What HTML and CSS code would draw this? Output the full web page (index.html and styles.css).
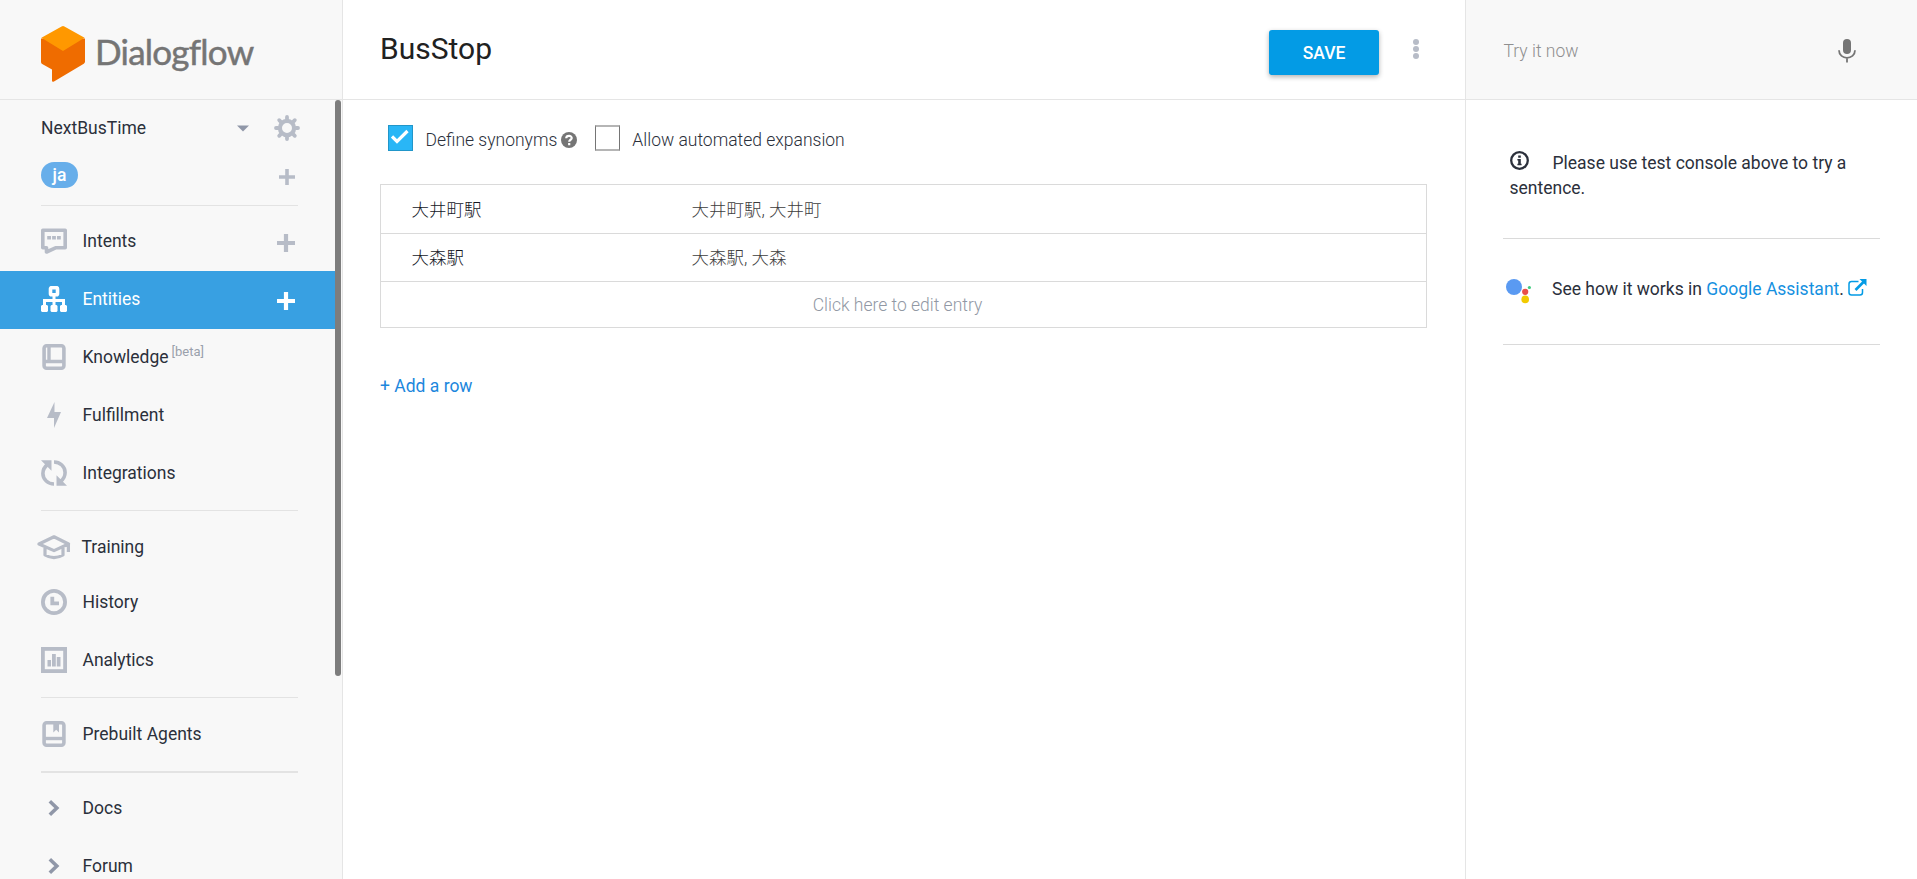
FILE: index.html
```
<!DOCTYPE html>
<html lang="en">

<head>
	<title>Dialogflow</title>
	<meta charset="UTF-8">
	<link rel="stylesheet" href="styles.css">
	<meta name="viewport" content="width=device-width, initial-scale=1">
</head>

<body>
	<nav class="sidebar">
		<div class="logo">
			<svg class="logo-mark" width="46" height="58" viewBox="0 0 46 58">
				<path fill="#ef6c00" d="M1 13.5 L45 13.5 V36.5 Q45 38 43.8 38.7 L14 56.5 Q12 57.5 12 55.5 V44.5 L2.2 39 Q1 38.3 1 37Z" />
				<path fill="#ff9800" d="M1.4 12.8 L21.6 1.4 Q23 .6 24.4 1.4 L44.6 12.8 L23 26Z" />
			</svg>
			<span class="logo-text">Dialogflow</span>
		</div>
		<div class="menu">
			<div class="agent">
				<span class="agent-name">NextBusTime</span>
				<svg class="caret" width="12" height="7" viewBox="0 0 12 7"><path d="M0 0.5H12L6 6.5Z" /></svg>
				<svg class="icon" width="26" height="26" viewBox="0 0 26 26">
					<circle cx="13" cy="13" r="7.1" fill="none" stroke="currentColor" stroke-width="4.2" />
					<path stroke="currentColor" stroke-width="3.8" stroke-linecap="round" d="M13 4V2M13 22V24M4 13H2M22 13H24M6.6 6.6L5.2 5.2M19.4 6.6L20.8 5.2M6.6 19.4L5.2 20.8M19.4 19.4L20.8 20.8" />
				</svg>
			</div>
			<div class="lang">
				<span class="lang-badge">ja</span>
				<svg class="icon plus-small" width="16" height="16" viewBox="0 0 16 16"><path d="M8 0V16M0 8H16" stroke="currentColor" stroke-width="3.6" /></svg>
			</div>
			<hr>
			<a class="item">
				<svg class="icon" width="26" height="26" viewBox="0 0 26 26">
					<path fill="none" stroke="currentColor" stroke-width="3.6" stroke-linejoin="round" d="M1.8 2.2H24.2V19.8H14.5L5.5 24V19.8H1.8Z" />
					<path fill="currentColor" d="M6.2 8H10V11.6H6.2ZM11.1 8H14.9V11.6H11.1ZM16 8H19.8V11.6H16Z" />
				</svg>
				<span>Intents</span>
				<svg class="plus" width="18" height="18" viewBox="0 0 18 18"><path d="M9 0V18M0 9H18" stroke="currentColor" stroke-width="4.2" /></svg>
			</a>
			<a class="item active">
				<svg class="icon" width="26" height="26" viewBox="0 0 26 26">
					<path fill="none" stroke="currentColor" stroke-width="3" d="M13 9V20M3.5 20V14.5H22.5V20" />
					<rect x="9.5" y="1.7" width="7" height="7" rx="1" fill="none" stroke="currentColor" stroke-width="3.6" />
					<path fill="currentColor" d="M1 19H6L7 20V25L6 26H1L0 25V20ZM10.5 19H15.5L16.5 20V25L15.5 26H10.5L9.5 25V20ZM20 19H25L26 20V25L25 26H20L19 25V20Z" />
				</svg>
				<span>Entities</span>
				<svg class="plus" width="18" height="18" viewBox="0 0 18 18"><path d="M9 0V18M0 9H18" stroke="currentColor" stroke-width="4.2" /></svg>
			</a>
			<a class="item">
				<svg class="icon" width="26" height="26" viewBox="0 0 26 26">
					<rect x="3.1" y="1.8" width="19.8" height="22.4" rx="2.5" fill="none" stroke="currentColor" stroke-width="3.6" />
					<path stroke="currentColor" stroke-width="3.4" d="M8 2V17M3 17.5H23" />
				</svg>
				<span>Knowledge<sup>[beta]</sup></span>
			</a>
			<a class="item">
				<svg class="icon" width="26" height="26" viewBox="0 0 26 26"><path fill="currentColor" d="M13.5 0V10H20L13 26V16H6Z" /></svg>
				<span>Fulfillment</span>
			</a>
			<a class="item">
				<svg class="icon" width="26" height="26" viewBox="0 0 26 26">
					<path fill="none" stroke="currentColor" stroke-width="3.6" d="M13 24C7 24 1.9 19.5 1.9 13.5C1.9 9 4 6.5 6.5 4.5M13 2C19 2 24.1 6.5 24.1 12.5C24.1 17 22 19.5 19.5 21.5" />
					<path fill="currentColor" d="M0 .2H10.5V10.7ZM26 25.8H15.5V15.3Z" />
				</svg>
				<span>Integrations</span>
			</a>
			<hr>
			<a class="item training">
				<svg class="icon wide" width="34" height="26" viewBox="0 0 34 26">
					<path fill="none" stroke="currentColor" stroke-width="3.2" stroke-linejoin="round" d="M2 10L17 2.8L31.5 10L17 16.6ZM8 13V21Q17 26.4 26 21V13M31.4 10V18" />
				</svg>
				<span>Training</span>
			</a>
			<a class="item">
				<svg class="icon" width="26" height="26" viewBox="0 0 26 26">
					<circle cx="13" cy="13" r="11.1" fill="none" stroke="currentColor" stroke-width="3.8" />
					<path fill="none" stroke="currentColor" stroke-width="3.8" d="M11.3 7.8V14.4H18" />
				</svg>
				<span>History</span>
			</a>
			<a class="item">
				<svg class="icon" width="26" height="26" viewBox="0 0 26 26">
					<rect x="1.9" y="1.9" width="22.2" height="22.2" fill="none" stroke="currentColor" stroke-width="3.8" />
					<path fill="currentColor" d="M6.5 13H10V19.5H6.5ZM11 7H14.8V19.5H11ZM15.8 10H19.5V19.5H15.8Z" />
				</svg>
				<span>Analytics</span>
			</a>
			<hr class="tall">
			<a class="item">
				<svg class="icon" width="26" height="26" viewBox="0 0 26 26">
					<rect x="3.1" y="1.8" width="19.8" height="22.4" rx="2.5" fill="none" stroke="currentColor" stroke-width="3.6" />
					<path stroke="currentColor" stroke-width="3.4" d="M3 17.5H23" />
					<path fill="currentColor" d="M12.3 2H18V11.5L15.2 8.8L12.3 11.5Z" />
				</svg>
				<span>Prebuilt Agents</span>
			</a>
			<hr class="thick">
			<a class="item">
				<svg class="icon chevron" width="26" height="26" viewBox="0 0 26 26"><path fill="none" stroke="currentColor" stroke-width="3.6" d="M8.8 6.3L15.8 13L8.8 19.7" /></svg>
				<span>Docs</span>
			</a>
			<a class="item">
				<svg class="icon chevron" width="26" height="26" viewBox="0 0 26 26"><path fill="none" stroke="currentColor" stroke-width="3.6" d="M8.8 6.3L15.8 13L8.8 19.7" /></svg>
				<span>Forum</span>
			</a>
		</div>
		<div class="scroll-thumb"></div>
	</nav>

	<main class="main">
		<header class="main-header">
			<h1>BusStop</h1>
			<button class="save">SAVE</button>
			<svg class="more" width="6" height="20" viewBox="0 0 6 20">
				<circle cx="3" cy="3" r="3" /><circle cx="3" cy="10" r="3" /><circle cx="3" cy="17" r="3" />
			</svg>
		</header>
		<div class="options">
			<span class="checkbox checked">
				<svg width="19" height="16" viewBox="0 0 19 16"><path fill="none" stroke="#fff" stroke-width="3.2" d="M1 7.5L6 12.5L16.5 2" /></svg>
			</span>
			<label>Define synonyms</label>
			<svg class="help" width="16" height="16" viewBox="0 0 16 16">
				<circle cx="8" cy="8" r="8" fill="#757575" />
				<path fill="none" stroke="#fff" stroke-width="2.2" d="M5.2 6.2C5.4 3 11 3.2 10.7 6.2C10.5 7.8 8.2 7.8 8.2 9.8M8.2 11V13.2" />
			</svg>
			<span class="checkbox"></span>
			<label>Allow automated expansion</label>
		</div>
		<div class="entries">
			<div class="entry"><span class="value">大井町駅</span><span class="synonyms">大井町駅, 大井町</span></div>
			<div class="entry second"><span class="value">大森駅</span><span class="synonyms">大森駅, 大森</span></div>
			<div class="entry empty">Click here to edit entry</div>
		</div>
		<a class="add-row">+ Add a row</a>
	</main>

	<aside class="console">
		<header class="console-header">
			<span>Try it now</span>
			<svg width="18" height="24" viewBox="0 0 18 24">
				<rect x="5" y="0" width="8" height="15" rx="4" fill="#757575" />
				<path fill="none" stroke="#757575" stroke-width="1.8" d="M1 11.3C1 21.3 17 21.3 17 11.3M9 19V23.5" />
			</svg>
		</header>
		<div class="console-body">
			<p class="hint">
				<svg class="info" width="19" height="19" viewBox="0 0 19 19">
					<circle cx="9.5" cy="9.5" r="8.3" fill="none" stroke="currentColor" stroke-width="2.3" />
					<path fill="currentColor" d="M8.2 4.5H10.8V6.7H8.2ZM7.4 8H10.8V12.8H11.6V14.2H7.4V12.8H8.2V9.4H7.4Z" />
				</svg>Please use test console above to try a sentence.
			</p>
			<div class="assistant">
				<svg class="assistant-logo" width="26" height="25" viewBox="0 0 26 25">
					<circle cx="8" cy="8" r="8" fill="#5a9af2" />
					<circle cx="19.2" cy="12.8" r="3.1" fill="#e94f48" />
					<circle cx="19.2" cy="20.4" r="3.8" fill="#f2ca00" />
					<circle cx="23.4" cy="8.5" r="1.6" fill="#3fcb7e" />
				</svg>
				<span>See how it works in <a>Google Assistant</a>.</span>
				<svg class="external" width="19" height="17" viewBox="0 0 19 17">
					<path fill="none" stroke="currentColor" stroke-width="1.5" d="M10.5 2.5H3.5Q1 2.5 1 5V13.5Q1 16 3.5 16H12Q14.5 16 14.5 13.5V10" />
					<path fill="none" stroke="currentColor" stroke-width="2.6" d="M7.5 11L15.5 3" />
					<path fill="currentColor" d="M11.5 0H18.5V7Z" />
				</svg>
			</div>
		</div>
	</aside>
</body>

</html>
```
FILE: styles.css
```
* {
	box-sizing: border-box;
}

body {
	display: flex;
	height: 100vh;
	margin: 0;
	overflow: hidden;
	color: #2b303b;
	background: #fff;
	font-family: Roboto, "Noto Sans CJK JP", sans-serif;
	font-size: 17.5px;
}

svg {
	display: block;
	flex: none;
}

/* sidebar */
.sidebar {
	position: relative;
	flex: none;
	width: 343px;
	background: #f8f8f8;
	border-right: 1px solid #e5e5e5;
}

.logo {
	display: flex;
	height: 100px;
	padding: 25px 0 0 40px;
	border-bottom: 1px solid #e5e5e5;
}

.logo-text {
	margin-left: 9px;
	color: #757575;
	font-family: Lato, sans-serif;
	font-size: 35px;
	letter-spacing: -0.75px;
	line-height: 52px;
	-webkit-text-stroke: 0.5px #757575;
}

.menu {
	width: 335px;
}

.agent {
	display: flex;
	align-items: center;
	height: 56px;
	padding: 0 35px 0 41px;
}

.agent-name {
	flex: 1;
}

.caret {
	margin-right: 25px;
	fill: #9097a8;
}

.lang {
	display: flex;
	align-items: center;
	justify-content: space-between;
	height: 49px;
	padding: 0 40px 11px 41px;
}

.lang-badge {
	width: 37px;
	height: 26px;
	color: #fff;
	background: #67aeea;
	border-radius: 13px;
	font-weight: 500;
	line-height: 26px;
	text-align: center;
}

.plus-small {
	margin-top: 3px;
}

hr {
	width: 257px;
	height: 1px;
	margin: 0 0 7px 41px;
	background: #e3e3e3;
	border: 0;
}

.item + hr {
	margin-top: 7px;
}

hr.tall {
	margin-bottom: 8px;
}

hr.thick {
	height: 2px;
}

.item {
	display: flex;
	align-items: center;
	height: 58px;
	padding: 0 40px 2px 41px;
}

.item span {
	flex: 1;
	margin-left: 15.5px;
	line-height: 22px;
}

.item sup {
	margin-left: 3px;
	color: #9aa1ac;
	font-size: 13px;
	line-height: 0;
	vertical-align: 7px;
}

.icon,
.plus {
	color: #b7bcc7;
}

.plus {
	margin-top: 3px;
}

.active {
	color: #fff;
	background: #38a0e2;
}

.active .icon,
.active .plus {
	color: #fff;
}

.training {
	height: 56px;
	padding: 1px 40px 0 41px;
}

.wide {
	margin: 0 -5px 0 -4px;
}

.chevron {
	color: #9097a8;
}

.scroll-thumb {
	position: absolute;
	top: 100px;
	left: 335px;
	width: 6px;
	height: 576px;
	background: #7d7d7d;
	border-radius: 3px;
}

/* entity editor */
.main {
	flex: 1;
}

.main-header {
	display: flex;
	height: 100px;
	padding: 30px 46px 0 37px;
	border-bottom: 1px solid #e5e5e5;
}

h1 {
	flex: 1;
	margin: 0;
	color: #212121;
	font-size: 30px;
	font-weight: 400;
	line-height: 37px;
}

.save {
	width: 110px;
	height: 45px;
	color: #fff;
	background: #039be5;
	border: 0;
	border-radius: 3px;
	box-shadow: 0 2px 5px rgba(0, 0, 0, 0.3);
	font: 500 17.5px Roboto, sans-serif;
}

.more {
	margin: 9px 0 0 34px;
	fill: #b7bcc7;
}

.options {
	display: flex;
	height: 84px;
	padding: 25px 0 0 45px;
	font-weight: 300;
}

.options label {
	margin-left: 12.5px;
	line-height: 30px;
}

.checkbox {
	width: 25px;
	height: 26px;
	border: 1px solid #757575;
	border-top: 2px solid #b5b5b5;
	border-bottom: 2px solid #b5b5b5;
}

.checked {
	padding: 3px 0 0 2px;
	background: #29b6f6;
	border: 1px solid #2196c9;
}

.help {
	margin: 7px 18px 0 3.5px;
}

.entries {
	width: 1047px;
	margin-left: 37px;
	border: 1px solid #dadada;
	font-weight: 300;
}

.entry {
	display: flex;
	align-items: center;
	height: 49px;
	padding: 0 0 2px 30.5px;
	border-bottom: 1px solid #dadada;
}

.entry.second {
	height: 48px;
}

.entry.empty {
	justify-content: center;
	height: 45px;
	padding: 0 12px 0 0;
	color: #9198a4;
	border: 0;
}

.value {
	width: 280px;
	color: #14171f;
}

.synonyms {
	color: #3d3d3d;
}

.add-row {
	display: block;
	margin: 47px 0 0 37px;
	color: #1c87dd;
	line-height: 22px;
}

/* test console */
.console {
	flex: none;
	width: 452px;
	border-left: 1px solid #e5e5e5;
}

.console-header {
	display: flex;
	justify-content: space-between;
	height: 100px;
	padding: 39px 61px 0 37.5px;
	color: #8f8f8f;
	background: #f8f8f8;
	border-bottom: 1px solid #e5e5e5;
	font-weight: 300;
	line-height: 24px;
}

.console-body {
	margin: 0 37px;
}

.hint {
	height: 139px;
	margin: 0;
	padding: 51px 20px 0 6.5px;
	border-bottom: 1px solid #dadada;
	line-height: 25px;
}

.info {
	display: inline-block;
	margin-right: 24px;
	vertical-align: -1px;
}

.assistant {
	display: flex;
	height: 106px;
	padding: 40px 0 0 2.5px;
	border-bottom: 1px solid #dadada;
}

.assistant span {
	margin-left: 20.5px;
	line-height: 20px;
}

.assistant a {
	color: #1590e0;
}

.external {
	margin-left: 4px;
	color: #039be5;
}
```
